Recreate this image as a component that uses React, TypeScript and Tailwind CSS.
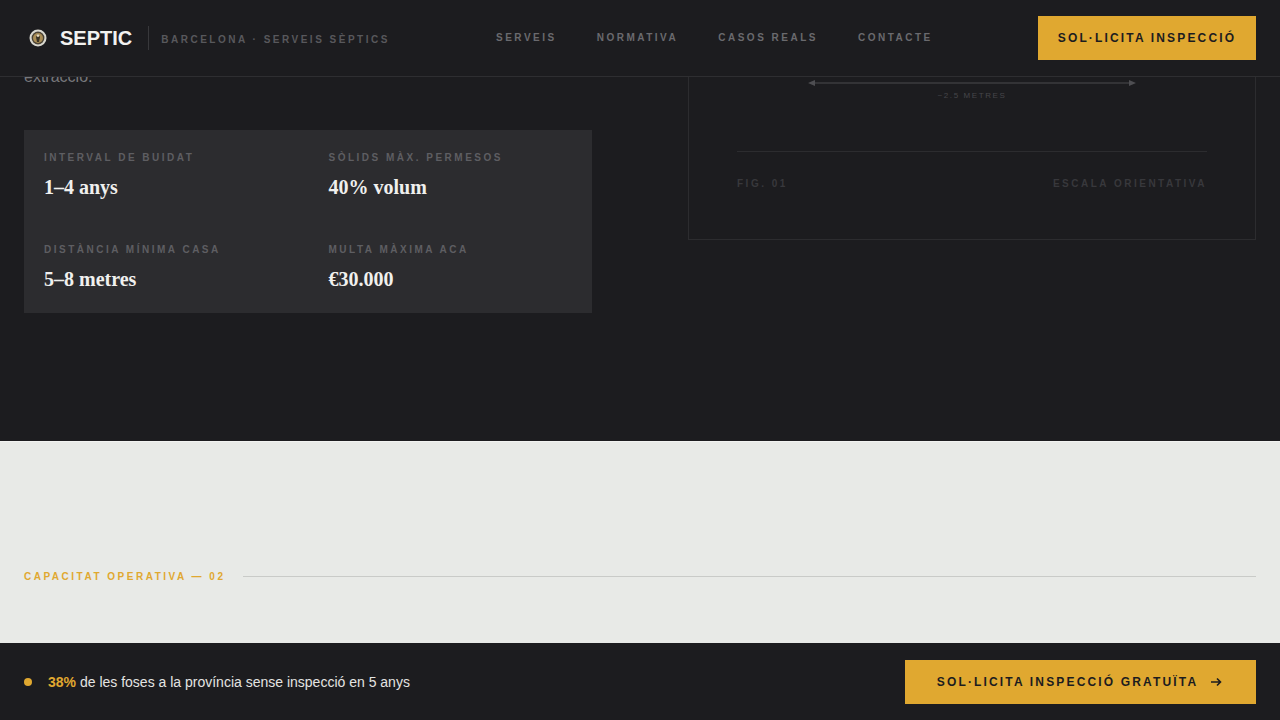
const sans = "font-['Liberation_Sans',Arial,sans-serif]";

const stats = [
  { label: "INTERVAL DE BUIDAT", value: "1–4 anys" },
  { label: "SÒLIDS MÀX. PERMESOS", value: "40% volum" },
  { label: "DISTÀNCIA MÍNIMA CASA", value: "5–8 metres" },
  { label: "MULTA MÀXIMA ACA", value: "€30.000" },
];

const nav = ["SERVEIS", "NORMATIVA", "CASOS REALS", "CONTACTE"];

function Logo() {
  return (
    <svg width="18" height="18" viewBox="0 0 18 18" className="shrink-0">
      <circle cx="9" cy="9" r="8.5" fill="#d9d8d0" />
      <circle cx="9" cy="9" r="6.4" fill="#4a4234" />
      <circle cx="9" cy="9" r="5" fill="#a88c55" />
      <path d="M9 4.5 L11 8 L10 13 L8 13 L7 8 Z" fill="#3a3325" />
      <circle cx="9" cy="6.6" r="1.3" fill="#e8dcc0" />
    </svg>
  );
}

export default function App() {
  return (
    <div className={`relative h-screen overflow-hidden bg-[#1c1c1f] ${sans}`}>
      <header className="absolute inset-x-0 top-0 z-10 flex h-[77px] items-center border-b border-[#2e2e31] bg-[#1c1c1f] pl-[29px] pr-6">
        <div className="flex w-[400px] items-center">
          <Logo />
          <span className="ml-[13px] text-[20px] font-bold text-[#f2f2f0]">SEPTIC</span>
          <span className="ml-4 h-6 w-px bg-[#38383b]" />
          <span className="ml-3 mt-[2px] text-[10px] font-bold tracking-[2.5px] text-[#58585c]">BARCELONA · SERVEIS SÈPTICS</span>
        </div>
        <nav className="ml-[67px] flex gap-10 pb-[2px]">
          {nav.map((n) => (
            <a key={n} className="text-[10px] font-bold tracking-[2.5px] text-[#6a6a6e]">
              {n}
            </a>
          ))}
        </nav>
        <button className="ml-auto flex h-11 w-[218px] items-center justify-center bg-[#e0a830] text-[12px] font-bold tracking-[2.16px] text-[#1c1c1f]">
          SOL·LICITA INSPECCIÓ
        </button>
      </header>

      <section className="grid h-[441px] grid-cols-2 gap-24 px-6">
        <div className="pt-[64px]">
          <p className="text-[16px] leading-[26px] text-[#77777b]">extracció.</p>
          <div className="mt-10 grid h-[183px] grid-cols-2 content-start gap-x-[41px] gap-y-[45px] bg-[#2c2c2f] px-5 pt-[22px]">
            {stats.map((s) => (
              <div key={s.label}>
                <div className="text-[10px] font-bold leading-[12px] tracking-[2.5px] text-[#5e5e62]">{s.label}</div>
                <div className="mt-[11px] font-['Liberation_Serif',serif] text-[20px] font-bold leading-[24px] text-[#f0f0ee]">
                  {s.value}
                </div>
              </div>
            ))}
          </div>
        </div>
        <div className="flex h-[240px] flex-col border border-[#2c2c2f] px-12 pt-[77px]">
          <svg width="328" height="10" viewBox="0 0 328 10" className="mx-auto block shrink-0">
            <line x1="3" y1="5" x2="325" y2="5" stroke="#4a4a4e" />
            <path d="M0 5 L7 2 V8 Z M328 5 L321 2 V8 Z" fill="#4e4e52" />
          </svg>
          <div className="mt-[3px] text-center text-[8px] leading-[10px] tracking-[1.6px] text-[#46464a]">~2.5 METRES</div>
          <div className="mt-[50px] h-px bg-[#2c2c2f]" />
          <div className="mt-[26px] flex justify-between text-[10px] font-bold leading-[12px] tracking-[2.5px] text-[#38383c]">
            <span>FIG. 01</span>
            <span>ESCALA ORIENTATIVA</span>
          </div>
        </div>
      </section>

      <section className="flex h-[202px] items-start gap-[17px] border-t border-[#f2f3f1] bg-[#e8eae7] px-6 pt-[129px]">
        <span className="text-[10px] font-bold leading-[12px] tracking-[2.5px] text-[#e0a830]">CAPACITAT OPERATIVA — 02</span>
        <span className="mt-[5px] h-px flex-1 bg-[#c9cbc8]" />
      </section>

      <footer className="absolute inset-x-0 bottom-0 flex h-[77px] items-center justify-between bg-[#1c1c1f] px-6 pt-px">
        <div className="flex items-center">
          <span className="h-2 w-2 rounded-full bg-[#e0a830]" />
          <p className="ml-4 text-[14px] text-[#e4e4e2]">
            <b className="font-bold text-[#e0a830]">38%</b> de les foses a la província sense inspecció en 5 anys
          </p>
        </div>
        <button className="flex h-11 w-[351px] items-center justify-center gap-[12px] bg-[#e0a830] pr-[2px] text-[12px] font-bold tracking-[2.16px] text-[#1c1c1f]">
          SOL·LICITA INSPECCIÓ GRATUÏTA
          <svg width="12" height="10" viewBox="0 0 12 10" fill="none" stroke="#1c1c1f" strokeWidth="1.6">
            <path d="M1 5 H10.5 M7 1.5 L10.5 5 L7 8.5" />
          </svg>
        </button>
      </footer>
    </div>
  );
}
